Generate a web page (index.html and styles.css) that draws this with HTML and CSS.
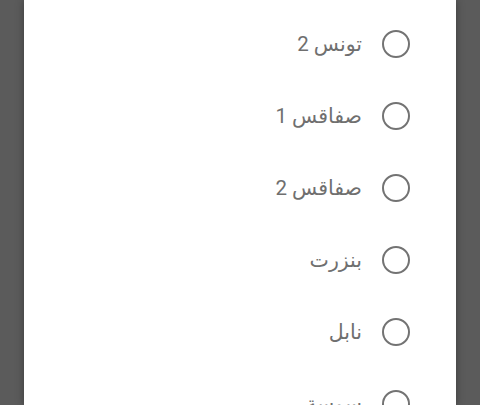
FILE: index.html
```html
<!DOCTYPE html>
<html lang="ar" dir="rtl">
<head>
    <meta charset="UTF-8" />
    <title>Select region</title>
    <link rel="stylesheet" href="styles.css">
</head>
<body>
    <div class="dialog">
        <ul class="choice-list">
            <li class="choice"><span class="radio"></span><span class="label">تونس 2</span></li>
            <li class="choice"><span class="radio"></span><span class="label">صفاقس 1</span></li>
            <li class="choice"><span class="radio"></span><span class="label">صفاقس 2</span></li>
            <li class="choice"><span class="radio"></span><span class="label">بنزرت</span></li>
            <li class="choice"><span class="radio"></span><span class="label">نابل</span></li>
            <li class="choice"><span class="radio"></span><span class="label">سوسة</span></li>
        </ul>
    </div>
</body>
</html>
```

FILE: styles.css
```css
* {
    margin: 0;
    padding: 0;
    box-sizing: border-box;
}

html, body {
    height: 100%;
    overflow: hidden;
}

body {
    background-color: #5b5b5b;
    font-family: Roboto, "DejaVu Sans", sans-serif;
}

.dialog {
    width: 432px;
    height: 100%;
    margin: 0 auto;
    background-color: #fff;
    box-shadow: 0 0 8px rgba(0, 0, 0, 0.35);
    overflow: hidden;
}

.choice-list {
    list-style: none;
    padding-top: 8px;
}

.choice {
    display: flex;
    align-items: center;
    gap: 20px;
    height: 72px;
    padding-right: 46px;
}

.radio {
    width: 28px;
    height: 28px;
    border: 2.7px solid #737373;
    border-radius: 50%;
    flex-shrink: 0;
}

.label {
    font-size: 20.5px;
    color: #6f6f6f;
}
```
